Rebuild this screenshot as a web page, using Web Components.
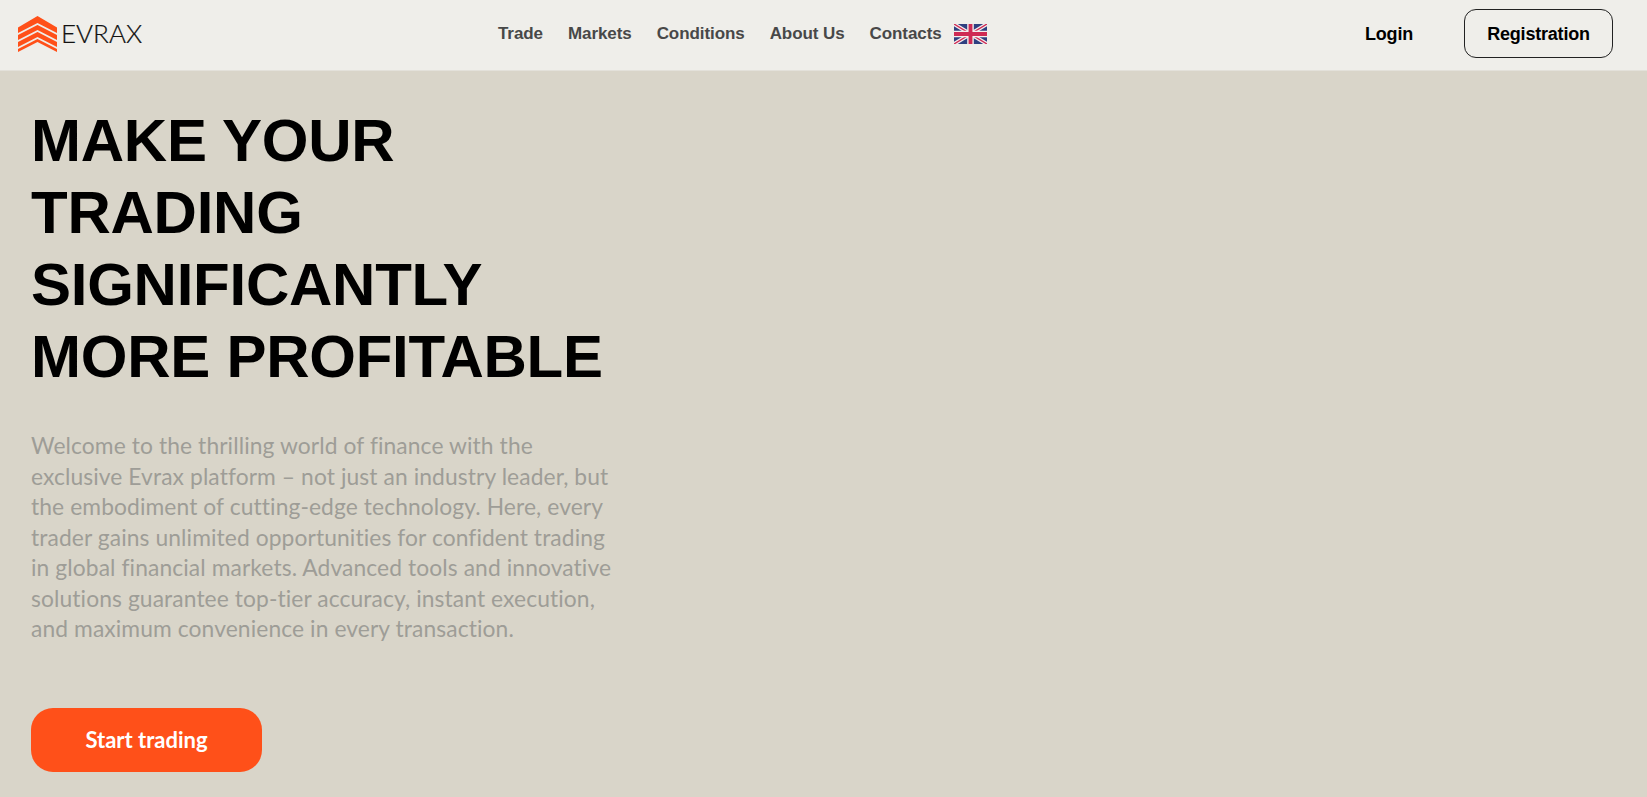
<!DOCTYPE html>
<html lang="en"><head><meta charset="utf-8"><title>Evrax</title>
<style>
html,body{margin:0;padding:0;background:#d9d5c9;overflow:hidden}
body{font-family:"Liberation Sans",Arial,sans-serif}
</style></head><body>
<evrax-header>
  <evrax-logo slot="logo"></evrax-logo>
  <nav-link slot="nav">Trade</nav-link>
  <nav-link slot="nav">Markets</nav-link>
  <nav-link slot="nav">Conditions</nav-link>
  <nav-link slot="nav">About Us</nav-link>
  <nav-link slot="nav">Contacts</nav-link>
  <uk-flag slot="flag"></uk-flag>
  <auth-buttons slot="auth"></auth-buttons>
</evrax-header>
<evrax-hero>
  <span slot="title">MAKE YOUR TRADING SIGNIFICANTLY MORE PROFITABLE</span>
  <span slot="text">Welcome to the thrilling world of finance with the<br>exclusive Evrax platform – not just an industry leader, but<br>the embodiment of cutting-edge technology. Here, every<br>trader gains unlimited opportunities for confident trading<br>in global financial markets. Advanced tools and innovative<br>solutions guarantee top-tier accuracy, instant execution,<br>and maximum convenience in every transaction.</span>
  <span slot="cta">Start trading</span>
</evrax-hero>
<script>
function def(name, html){
  customElements.define(name, class extends HTMLElement{
    constructor(){super();this.attachShadow({mode:"open"}).innerHTML=html;}
  });
}
def("evrax-header",`<style>
:host{display:block;height:71px;box-sizing:border-box;background:#efeeea;border-bottom:1px solid #e3e1da}
.bar{display:flex;align-items:center;height:100%;padding:0 34px 3px 18px;box-sizing:border-box}
.logo{width:480px;flex:none}
nav{display:flex;align-items:center;gap:25px}
.flag{margin-left:12px;display:flex}
.auth{margin-left:auto}
</style><div class="bar"><div class="logo"><slot name="logo"></slot></div><nav><slot name="nav" style="display:contents"></slot></nav><div class="flag"><slot name="flag"></slot></div><div class="auth"><slot name="auth"></slot></div></div>`);
def("evrax-logo",`<style>
:host{display:flex;align-items:center;gap:4px}
svg{display:block}
span{font:300 25px/1 Lato,"Liberation Sans",sans-serif;color:#111;transform:scaleX(1.04);transform-origin:left;-webkit-text-stroke:.2px #111}
</style><svg width="39" height="36" viewBox="0 0 39 36"><path fill="#ff5019" d="M19.5 0 39 11.500V36L19.5 26 0 36V11.500Z"/><g fill="none" stroke="#efeeea" stroke-width="1.800"><path d="M-1 18.500 19.500 8 40 18.500"/><path d="M-1 25.500 19.500 15 40 25.500"/><path d="M-1 32.500 19.500 22 40 32.500"/></g></svg><span>EVRAX</span>`);
def("nav-link",`<style>
:host{display:block;font:700 17px/20px "Liberation Sans",Arial,sans-serif;color:#484848;white-space:nowrap;letter-spacing:-.08px}
</style><slot></slot>`);
def("uk-flag",`<style>:host{display:block;line-height:0}</style><svg width="33" height="20" viewBox="0 0 60 36" preserveAspectRatio="none"><rect width="60" height="36" fill="#2f3f80"/><path d="M0 0 60 36M60 0 0 36" stroke="#f3eeee" stroke-width="7"/><path d="M0 0 60 36M60 0 0 36" stroke="#cf2a54" stroke-width="2.5"/><path d="M30 0V36M0 18H60" stroke="#f3eeee" stroke-width="12"/><path d="M30 0V36M0 18H60" stroke="#cf2a54" stroke-width="7"/></svg>`);
def("auth-buttons",`<style>
:host{display:flex;align-items:center;gap:51px;font:700 18px/22px "Liberation Sans",Arial,sans-serif;color:#000;letter-spacing:-.2px}
.reg{display:flex;align-items:center;justify-content:center;box-sizing:border-box;width:149px;height:49px;border:1px solid #222;border-radius:12px}
</style><span>Login</span><div class="reg">Registration</div>`);
def("evrax-hero",`<style>
:host{display:block;padding:34px 0 0 31px}
h1{margin:0;width:600px;font:700 60px/72px "Liberation Sans",Arial,sans-serif;color:#000;letter-spacing:-.25px}
p{margin:37px 0 0;width:620px;font:400 22.8px/30.5px Lato,"Liberation Sans",sans-serif;color:#9e9d97;letter-spacing:.1px}
a{display:flex;align-items:center;justify-content:center;box-sizing:border-box;margin-top:64.500px;width:231px;height:64px;border-radius:22px;background:#ff5019;color:#fff;font:700 22px/24px Lato,sans-serif}
</style><h1><slot name="title"></slot></h1><p><slot name="text"></slot></p><a><slot name="cta"></slot></a>`);
</script>
</body></html>
